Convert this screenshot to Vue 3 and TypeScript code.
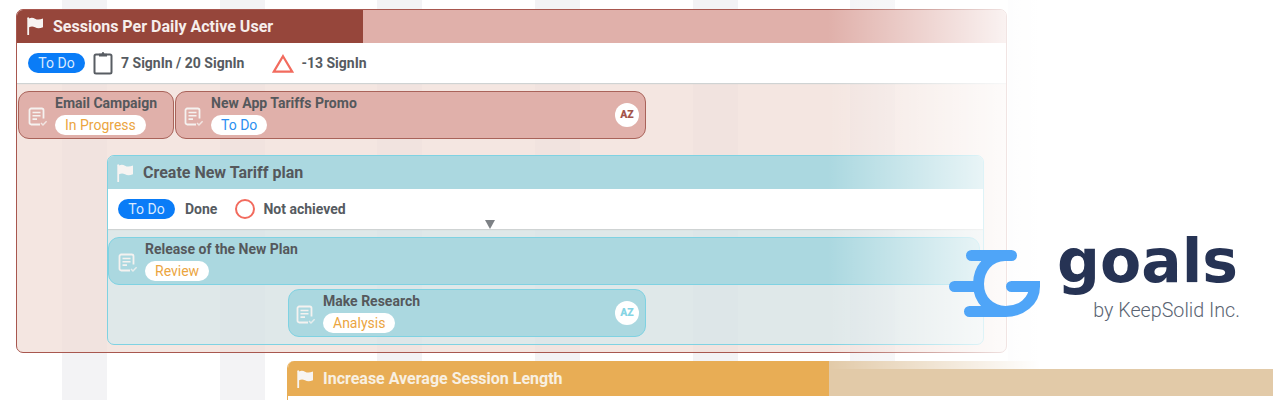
<script setup lang="ts">
interface Task {
  title: string;
  status: string;
  tone: 'orange' | 'blue';
  avatar?: boolean;
}

const redTasks: Task[] = [
  { title: 'Email Campaign', status: 'In Progress', tone: 'orange' },
  { title: 'New App Tariffs Promo', status: 'To Do', tone: 'blue', avatar: true }
];
</script>

<template>
  <div class="page">
    <svg class="defs" aria-hidden="true">
      <symbol id="flag" viewBox="0 0 17 18">
        <path d="M1.2 17.5V1.2" fill="none" stroke="currentColor" stroke-width="1.8" stroke-linecap="round" />
        <path d="M2 1.5c2.400-1.200 4.200-.8 6 .2 2.200 1.200 4.400 1.200 8-.1v8.600c-3.400 1.400-5.800 1.300-8 .1-2-1-3.600-1.200-6 0z" fill="currentColor" />
      </symbol>
      <symbol id="task" viewBox="0 0 20 20">
        <path d="M12 17.500H3.200c-.9 0-1.700-.8-1.700-1.700V3.200c0-.9.8-1.700 1.700-1.700h10.600c.9 0 1.700.8 1.700 1.700v8.300" fill="none" stroke="currentColor" stroke-width="1.800" />
        <path d="M4.500 5.500h8M4.500 8.800h8M4.500 12.100h4.500" fill="none" stroke="currentColor" stroke-width="1.600" />
        <path d="M13 16l2 2 3.600-3.800" fill="none" stroke="currentColor" stroke-width="1.500" opacity=".8" />
      </symbol>
    </svg>

    <section class="goal goal-red">
      <header class="goal-head">
        <div class="head-fill">
          <svg class="flag"><use href="#flag" /></svg>
          <span>Sessions Per Daily Active User</span>
        </div>
      </header>
      <div class="goal-info">
        <span class="pill-todo">To Do</span>
        <svg class="clipboard" viewBox="0 0 20 24">
          <rect x="1.500" y="3.500" width="17" height="19" rx="1.500" fill="none" stroke="#585d63" stroke-width="2" />
          <path d="M6 5.500V2.800h2.600C9 1.600 9.400 1 10 1s1 .6 1.400 1.800H14v2.700z" fill="#585d63" />
        </svg>
        <span class="metric">7 SignIn / 20 SignIn</span>
        <svg class="triangle" viewBox="0 0 22 19">
          <path d="M11 2.200 20.200 17.600H1.800z" fill="none" stroke="#f26b5e" stroke-width="2.200" />
        </svg>
        <span class="metric">-13 SignIn</span>
      </div>

      <div class="goal-body">
        <div class="task-row">
          <div v-for="task in redTasks" :key="task.title" class="task task-red" :class="{ wide: task.avatar }">
            <svg class="task-icon"><use href="#task" /></svg>
            <div class="task-text">
              <strong>{{ task.title }}</strong>
              <span class="status" :class="task.tone">{{ task.status }}</span>
            </div>
            <span v-if="task.avatar" class="avatar red-text">AZ</span>
          </div>
        </div>

        <section class="goal goal-blue">
          <header class="blue-head">
            <svg class="flag"><use href="#flag" /></svg>
            <span>Create New Tariff plan</span>
          </header>
          <div class="goal-info blue-info">
            <span class="pill-todo">To Do</span>
            <span class="metric done">Done</span>
            <span class="ring"></span>
            <span class="metric">Not achieved</span>
            <span class="arrow"></span>
          </div>
          <div class="blue-body">
            <div class="task task-blue release">
              <svg class="task-icon"><use href="#task" /></svg>
              <div class="task-text">
                <strong>Release of the New Plan</strong>
                <span class="status orange">Review</span>
              </div>
            </div>
            <div class="task task-blue research">
              <svg class="task-icon"><use href="#task" /></svg>
              <div class="task-text">
                <strong>Make Research</strong>
                <span class="status orange">Analysis</span>
              </div>
              <span class="avatar blue-text">AZ</span>
            </div>
          </div>
        </section>
      </div>
    </section>

    <section class="goal-orange">
      <div class="orange-fill">
        <svg class="flag"><use href="#flag" /></svg>
        <span>Increase Average Session Length</span>
      </div>
    </section>

    <div class="fade"></div>

    <div class="brand">
      <svg class="brand-mark" viewBox="0 0 94 67">
        <path
          d="M22.500 5.500H62.500M56 5.500C40 5.500 29.500 19 29.500 34c0 16 12 27.500 27 27.500 15.500 0 29-10 29-25H62.500M5.500 36.500H29M20.500 61.500H56"
          fill="none"
          stroke="#4fa5f8"
          stroke-width="11"
          stroke-linecap="round"
        />
      </svg>
      <div class="brand-text">
        <div class="brand-name">goals</div>
        <div class="brand-by">by KeepSolid Inc.</div>
      </div>
    </div>
  </div>
</template>

<style>
body {
  margin: 0;
  background: #fff;
}
</style>

<style scoped>
* {
  box-sizing: border-box;
}

.page {
  position: relative;
  width: 1280px;
  height: 400px;
  overflow: hidden;
  padding: 9px 0 0 16px;
  font-family: Roboto, sans-serif;
  background: repeating-linear-gradient(90deg, #fff 0 62px, #f3f3f5 62px 107px, #fff 107px 157.7px);
}

.defs {
  position: absolute;
  width: 0;
  height: 0;
}

.goal-red {
  width: 991px;
  height: 344px;
  border: 1px solid #a8574f;
  border-radius: 7px;
  overflow: hidden;
  background: rgba(240, 221, 215, 0.75);
}

.goal-head {
  height: 33px;
  background: #e0b0aa;
}

.head-fill {
  display: flex;
  align-items: center;
  width: 346px;
  height: 100%;
  padding: 0 0 1px 10px;
  background: #96463b;
  color: #f6eeec;
  font-size: 16px;
  font-weight: 700;
}

.flag {
  width: 17px;
  height: 18px;
  margin-right: 9px;
  color: #f7f4f2;
  flex: none;
}

.goal-info {
  display: flex;
  align-items: center;
  height: 40px;
  padding-left: 11px;
  background: #fff;
  box-shadow: 0 1px 1px #cfd3d3;
}

.pill-todo {
  width: 57px;
  height: 20px;
  border-radius: 10px;
  background: #0a7cf7;
  color: #d9eaff;
  font-size: 14px;
  line-height: 20px;
  text-align: center;
}

.clipboard {
  width: 20px;
  height: 24px;
  margin: 0 8px;
}

.metric {
  color: #565b61;
  font-size: 14px;
  font-weight: 700;
}

.triangle {
  width: 22px;
  height: 19px;
  margin: 0 7px 0 28px;
}

.goal-body {
  padding: 8px 0 0 1px;
}

.task-row {
  display: flex;
  gap: 1px;
}

.task {
  display: flex;
  align-items: center;
  height: 48px;
  padding-left: 8px;
  border-radius: 11px;
}

.task-red {
  width: 156px;
  padding-left: 9px;
  border: 1px solid #a9635a;
  background: #e0b0aa;
}

.task-red.wide {
  width: 471px;
  padding-left: 8px;
}

.task-blue {
  border: 1px solid #7fd2e2;
  background: #abd8e0;
}

.task-icon {
  width: 20px;
  height: 20px;
  flex: none;
  color: #f5f2f0;
  margin-top: 3px;
}

.task-text {
  display: flex;
  flex-direction: column;
  align-items: flex-start;
  margin-left: 7px;
  flex: 1;
}

.task-text strong {
  color: #55585c;
  font-size: 14px;
  font-weight: 700;
  line-height: 16px;
  margin-top: -1px;
  margin-bottom: 4px;
}

.status {
  height: 20px;
  padding: 0 10px;
  border-radius: 10px;
  background: #fff;
  font-size: 14px;
  line-height: 20px;
}

.status.orange {
  color: #eba53f;
}

.status.blue {
  color: #2c8ff0;
}

.avatar {
  width: 24px;
  height: 24px;
  margin-right: 6px;
  border-radius: 50%;
  background: #fff;
  font-size: 10.500px;
  font-weight: 900;
  line-height: 24px;
  text-align: center;
}

.red-text {
  color: #a4544a;
}

.blue-text {
  color: #85d4e4;
}

.goal-blue {
  position: relative;
  width: 877px;
  height: 190px;
  margin: 16px 0 0 89px;
  border: 1px solid #7fd2e2;
  border-radius: 7px;
  overflow: hidden;
  background: rgba(202, 233, 241, 0.5);
}

.blue-head {
  display: flex;
  align-items: center;
  height: 33px;
  padding-left: 9px;
  background: #abd8e0;
  color: #55585c;
  font-size: 16px;
  font-weight: 700;
}

.blue-info {
  position: relative;
  padding-left: 10px;
}

.done {
  margin-left: 10px;
}

.ring {
  width: 20px;
  height: 20px;
  margin: 0 8px 0 18px;
  border: 2px solid #f26b5e;
  border-radius: 50%;
}

.arrow {
  position: absolute;
  left: 377px;
  bottom: 0;
  width: 10px;
  height: 9px;
  background: #7d8185;
  clip-path: polygon(0 0, 100% 0, 50% 100%);
}

.blue-body {
  padding: 8px 0 0 0;
}

.release {
  width: 872px;
  padding-left: 9px;
}

.research {
  width: 358px;
  margin: 4px 0 0 180px;
  padding-left: 7px;
}

.goal-orange {
  width: 986px;
  height: 40px;
  margin: 8px 0 0 271px;
  border-left: 1px solid #e8ad55;
  border-radius: 7px 0 0 0;
  overflow: hidden;
  background: #fff;
}

.orange-fill {
  display: flex;
  align-items: center;
  height: 35px;
  padding-left: 9px;
  color: #f8f0e2;
  font-size: 16px;
  font-weight: 700;
  background: linear-gradient(90deg, #e8ad55 0 541px, #e2caa8 541px);
}

.fade {
  position: absolute;
  left: 828px;
  top: 0;
  width: 452px;
  height: 369px;
  background: linear-gradient(90deg, rgba(255, 255, 255, 0), #fff 212px);
}

.brand {
  position: absolute;
  left: 944px;
  top: 235px;
  display: flex;
}

.brand-mark {
  width: 94px;
  height: 67px;
  margin: 15px 14px 0 5px;
  flex: none;
}

.brand-text {
  display: flex;
  flex-direction: column;
  align-items: flex-end;
}

.brand-name {
  color: #263354;
  font-family: "DejaVu Sans", sans-serif;
  font-size: 60px;
  font-weight: 700;
  line-height: 52px;
}

.brand-by {
  margin: 13px -2px 0 0;
  color: #5a6472;
  font-size: 19.700px;
  font-weight: 300;
  line-height: 22px;
}
</style>
